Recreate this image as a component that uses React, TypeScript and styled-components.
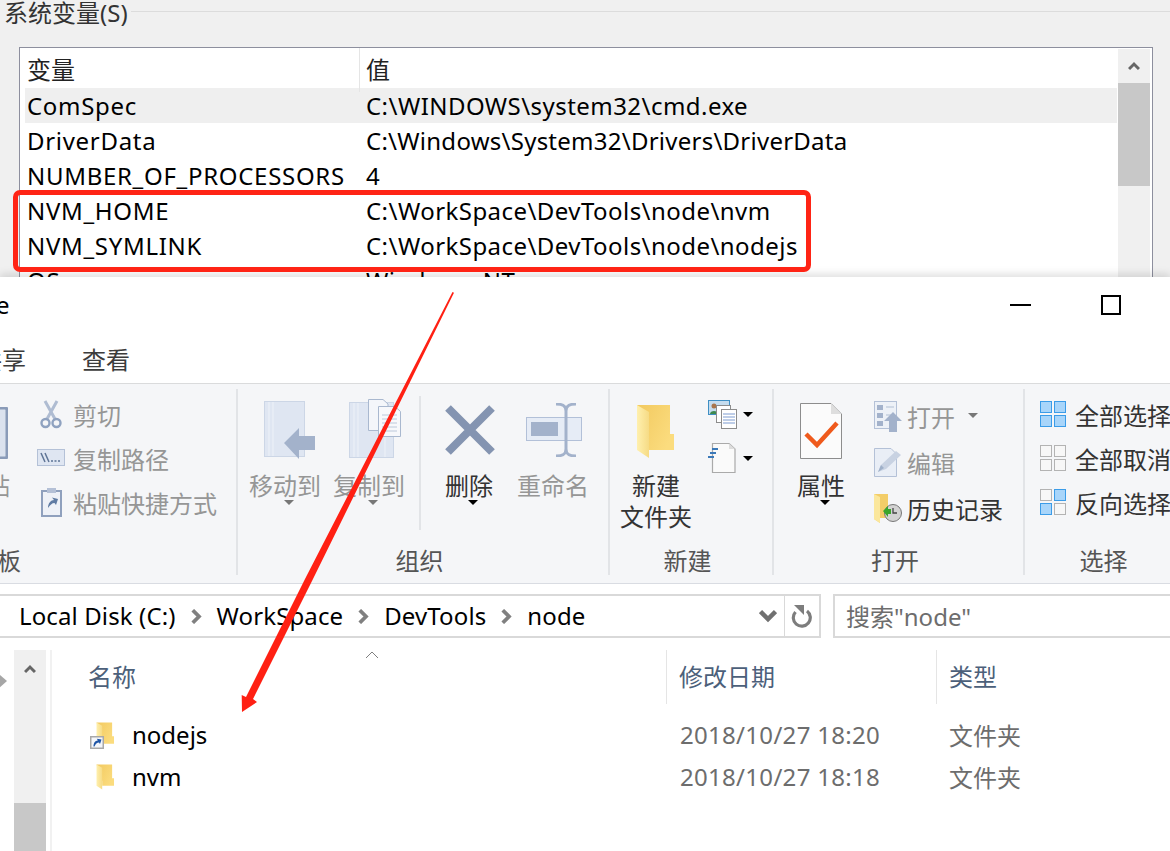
import React from "react";
import styled, { createGlobalStyle } from "styled-components";

const GlobalStyle = createGlobalStyle`
  html, body {
    margin: 0;
    padding: 0;
    background: #fff;
  }
  body {
    font-family: "Noto Sans", "Noto Sans CJK SC", sans-serif;
    font-size: 24px;
  }
`;

const Page = styled.div`
  position: relative;
  width: 1170px;
  height: 851px;
  overflow: hidden;
  display: flex;
  flex-direction: column;
  background: #fff;
`;

/* ---------- env vars dialog behind ---------- */
const EnvPanel = styled.section`
  height: 277px;
  flex-shrink: 0;
  background: #f0f0f0;
  overflow: hidden;
`;

const LegendRow = styled.div`
  display: flex;
  align-items: flex-start;
  height: 24px;
  padding-left: 4px;
  color: #333;
  line-height: 26px;
`;

const LegendLine = styled.div`
  flex: 1;
  height: 1px;
  margin: 11px 0 0 3px;
  background: #dcdcdc;
`;

const ListBox = styled.div`
  display: flex;
  width: 1132px;
  height: 240px;
  margin: 23px 0 0 19px;
  border: 1px solid #8d8f9e;
  border-bottom: 0;
  background: #fff;
`;

const ListTable = styled.div`
  flex: 1;
  padding: 0 1px 0 5px;
  min-width: 0;
`;

const HeaderRow = styled.div`
  display: grid;
  grid-template-columns: 335px 1fr;
  height: 40px;
  align-items: stretch;
  line-height: 44px;
  color: #222;
`;

const HeaderCell = styled.div<{ $last?: boolean }>`
  padding-left: ${(p) => (p.$last ? 6 : 2)}px;
  border-right: ${(p) => (p.$last ? 0 : "1px solid #e5e5e5")};
`;

const VarRow = styled.div<{ $active?: boolean }>`
  display: grid;
  grid-template-columns: 335px 1fr;
  height: 35px;
  line-height: 36px;
  color: #000;
  background: ${(p) => (p.$active ? "#efefef" : "transparent")};
  white-space: nowrap;
  letter-spacing: 0.45px;
`;

const VarName = styled.div`
  padding-left: 2px;
  letter-spacing: 0.7px;
`;

const VarValue = styled.div<{ $tight?: boolean }>`
  padding-left: 6px;
  letter-spacing: ${(p) => (p.$tight ? "0.25px" : "0.45px")};
`;

const ScrollBar = styled.div`
  width: 32px;
  margin: 1px 2px 0 0;
  background: #f0f0f0;
  display: flex;
  flex-direction: column;
  align-items: center;
`;

const ScrollArrow = styled.div<{ $h: number }>`
  height: ${(p) => p.$h}px;
  width: 100%;
  display: flex;
  align-items: center;
  justify-content: center;
  flex-shrink: 0;
`;

const ScrollThumb = styled.div<{ $h: number }>`
  width: 100%;
  height: ${(p) => p.$h}px;
  background: #c8c8c8;
`;

/* ---------- explorer window ---------- */
const Explorer = styled.section`
  position: relative;
  flex: 1;
  display: flex;
  flex-direction: column;
  background: #fff;
  box-shadow: 0 -3px 8px rgba(0, 0, 0, 0.13);
  min-height: 0;
`;

const TitleBar = styled.div`
  display: flex;
  justify-content: space-between;
  height: 62px;
  flex-shrink: 0;
`;

const WindowTitle = styled.div`
  margin-left: -48px;
  line-height: 56px;
  color: #000;
`;

const WindowControls = styled.div`
  display: flex;
  align-items: flex-start;
  padding: 18px 49px 0 0;
  gap: 70px;
`;

const MinButton = styled.div`
  width: 21px;
  height: 2px;
  margin-top: 9px;
  background: #000;
`;

const MaxButton = styled.div`
  width: 20px;
  height: 20px;
  box-sizing: border-box;
  border: 2px solid #000;
`;

const TabRow = styled.div`
  display: flex;
  height: 44px;
  gap: 56px;
  margin-left: -22px;
  flex-shrink: 0;
  line-height: 42px;
  color: #3c3c3c;
`;

const Ribbon = styled.div`
  display: flex;
  height: 199px;
  flex-shrink: 0;
  overflow: hidden;
  background: #f5f6f8;
  border-top: 1px solid #dadbdc;
  border-bottom: 1px solid #d9dce2;
`;

const RibbonGroup = styled.div<{ $w: number; $last?: boolean }>`
  width: ${(p) => p.$w}px;
  flex-shrink: 0;
  box-sizing: border-box;
  margin: 5px 0 8px;
  border-right: ${(p) => (p.$last ? 0 : "2px solid #e2e4e7")};
  display: flex;
  flex-direction: column;
`;

const GroupBody = styled.div<{ $pad: number; $gap?: number }>`
  flex: 1;
  display: flex;
  align-items: flex-start;
  padding-left: ${(p) => p.$pad}px;
  gap: ${(p) => p.$gap ?? 0}px;
  min-height: 0;
`;

const GroupLabel = styled.div<{ $flush?: boolean }>`
  height: 28px;
  line-height: 26px;
  padding-right: ${(p) => (p.$flush ? 0 : 7)}px;
  margin-left: ${(p) => (p.$flush ? -51 : 0)}px;
  text-align: ${(p) => (p.$flush ? "left" : "center")};
  color: #555;
  position: relative;
  top: 1px;
`;

const BigButton = styled.div<{ $w: number; $off?: boolean; $ml?: number }>`
  width: ${(p) => p.$w}px;
  margin-left: ${(p) => p.$ml ?? 0}px;
  flex-shrink: 0;
  display: flex;
  flex-direction: column;
  align-items: center;
  text-align: center;
  line-height: 31px;
  color: ${(p) => (p.$off ? "#969696" : "#333")};
`;

const BigIcon = styled.div<{ $nudge?: number; $lift?: number }>`
  height: 81px;
  display: flex;
  align-items: flex-end;
  justify-content: center;
  padding-left: ${(p) => p.$nudge ?? 0}px;
  padding-bottom: ${(p) => 11 + (p.$lift ?? 0)}px;
  box-sizing: border-box;
`;

const DropCaret = styled.div<{ $off?: boolean }>`
  width: 0;
  height: 0;
  border-left: 5px solid transparent;
  border-right: 5px solid transparent;
  border-top: 5px solid ${(p) => (p.$off ? "#777" : "#000")};
`;

const BigCaret = styled(DropCaret)`
  margin: -1px 0 0 8px;
`;

const OpenCaret = styled(DropCaret)`
  margin: 0 0 2px 8px;
`;

const InnerSeparator = styled.div`
  width: 2px;
  height: 134px;
  margin: 7px 24px 0 14px;
  background: #e2e4e7;
  flex-shrink: 0;
`;

const SmallColumn = styled.div<{ $top: number }>`
  display: flex;
  flex-direction: column;
  padding-top: ${(p) => p.$top}px;
  flex-shrink: 0;
`;

const SmallRow = styled.div<{ $h: number; $off?: boolean; $gap?: number }>`
  display: flex;
  align-items: center;
  height: ${(p) => p.$h}px;
  gap: ${(p) => p.$gap ?? 6}px;
  white-space: nowrap;
  color: ${(p) => (p.$off ? "#969696" : "#333")};
`;

const SmallIcon = styled.div<{ $w?: number }>`
  width: ${(p) => p.$w ?? 28}px;
  display: flex;
  justify-content: center;
  flex-shrink: 0;
`;

const AddressRow = styled.div`
  display: flex;
  gap: 12px;
  height: 44px;
  margin-top: 10px;
  flex-shrink: 0;
`;

const AddressBox = styled.div`
  width: 822px;
  margin-left: -1px;
  display: flex;
  align-items: center;
  box-sizing: border-box;
  border: 2px solid #d9d9d9;
  border-left: 0;
  padding-left: 20px;
  color: #000;
  white-space: nowrap;
  letter-spacing: 0.12px;
`;

const Crumb = styled.span`
  margin-bottom: 2px;
`;

const CrumbChevron = styled.div`
  width: 41px;
  display: flex;
  justify-content: center;
`;

const AddressSpacer = styled.div`
  flex: 1;
`;

const AddressDrop = styled.div`
  width: 32px;
  display: flex;
  justify-content: center;
`;

const RefreshButton = styled.div`
  width: 34px;
  height: 100%;
  display: flex;
  align-items: center;
  justify-content: center;
  border-left: 1px solid #d9d9d9;
`;

const SearchBox = styled.div`
  flex: 1;
  display: flex;
  align-items: center;
  box-sizing: border-box;
  border: 2px solid #d9d9d9;
  border-right: 0;
  padding: 0 0 2px 11px;
  color: #6d6d6d;
`;

const FileArea = styled.div`
  flex: 1;
  display: flex;
  margin-top: 12px;
  min-height: 0;
`;

const NavPane = styled.div`
  width: 50px;
  flex-shrink: 0;
  display: flex;
  position: relative;
`;

const NavCollapsed = styled.div`
  width: 14px;
  padding-top: 12px;
  overflow: hidden;
`;

const NavArrow = styled.svg`
  margin-left: -1px;
`;

const NavScroll = styled.div`
  width: 32px;
  background: #f0f0f0;
  display: flex;
  flex-direction: column;
  justify-content: space-between;
`;

const MainPane = styled.div`
  flex: 1;
  border-left: 2px solid #f1f1f1;
  min-width: 0;
`;

const ColumnHeader = styled.div`
  display: grid;
  grid-template-columns: 614px 270px 1fr;
  height: 50px;
  margin-bottom: 13px;
  color: #4c607a;
  line-height: 54px;
`;

const ColumnCell = styled.div<{ $first?: boolean }>`
  position: relative;
  box-sizing: border-box;
  padding-left: ${(p) => (p.$first ? 36 : 12)}px;
  border-left: ${(p) => (p.$first ? 0 : "1px solid #e5e5e5")};
`;

const SortCaret = styled.svg`
  position: absolute;
  left: 313px;
  top: 0;
`;

const FileRow = styled.div`
  display: grid;
  grid-template-columns: 614px 270px 1fr;
  height: 42px;
  align-items: center;
  white-space: nowrap;
`;

const FileName = styled.div`
  display: flex;
  align-items: center;
  padding-left: 38px;
  color: #000;
`;

const FileIconBox = styled.div`
  position: relative;
  width: 42px;
  height: 28px;
  flex-shrink: 0;
  padding: 2px 0 0 6px;
  box-sizing: border-box;
`;

const ShortcutBadge = styled.svg`
  position: absolute;
  left: 0;
  top: 16px;
`;

const FileDate = styled.div`
  padding-left: 14px;
  color: #6d6d6d;
  letter-spacing: 0.3px;
`;

const FileType = styled.div`
  padding-left: 13px;
  color: #6d6d6d;
`;

/* ---------- annotations ---------- */
const RedFrame = styled.div`
  position: absolute;
  left: 13px;
  top: 190px;
  width: 798px;
  height: 82px;
  box-sizing: border-box;
  border: 5px solid #ff2415;
  border-radius: 7px;
`;

const ArrowLayer = styled.svg`
  position: absolute;
  left: 0;
  top: 0;
  pointer-events: none;
`;

/* ---------- icons ---------- */
const Chev = ({ dir, color = "#666", size = 12 }: { dir: "up" | "down" | "right"; color?: string; size?: number }) => {
  const d = dir === "up" ? "M1 9 L6 4 L11 9" : dir === "down" ? "M1 3 L6 8 L11 3" : "M3 1 L8 6 L3 11";
  return (
    <svg width={size} height={size} viewBox="0 0 12 12" fill="none">
      <path d={d} stroke={color} strokeWidth="3" />
    </svg>
  );
};

const Scissors = () => (
  <svg width="22" height="29" viewBox="0 0 22 29" fill="none">
    <path d="M5 1 L15 19 M17 1 L7 19" stroke="#afbcd2" strokeWidth="3" />
    <circle cx="5.5" cy="23" r="4" stroke="#8fa2c0" strokeWidth="2.4" />
    <circle cx="16.5" cy="23" r="4" stroke="#8fa2c0" strokeWidth="2.4" />
  </svg>
);

const PathIcon = () => (
  <svg width="28" height="18" viewBox="0 0 28 18" fill="none">
    <rect x="0.5" y="0.5" width="27" height="16" fill="#dfe6f2" stroke="#b4c1d7" />
    <path d="M4 4 L8 13 M8 4 L12 13" stroke="#5f7596" strokeWidth="1.5" />
    <path d="M14 12 H24" stroke="#5f7596" strokeWidth="1.6" strokeDasharray="2 1.5" />
  </svg>
);

const ClipShortcut = () => (
  <svg width="21" height="30" viewBox="0 0 21 30">
    <rect x="1" y="4" width="19" height="25" fill="#eef1f7" stroke="#8fa0bd" strokeWidth="2" />
    <rect x="6" y="1" width="9" height="5" fill="#b4c0d6" />
    <path d="M7 21 C7 16 10 13 13 13 L11 10.5 L17 12 L15 18 L13.5 16 C11 16 9 18 7 21 Z" fill="#5f7ba3" />
  </svg>
);

const PastePartial = () => (
  <svg width="44" height="52" viewBox="0 0 44 52">
    <rect x="1" y="1" width="42" height="50" rx="2" fill="#dbe2ee" stroke="#8a9bb8" strokeWidth="3" />
  </svg>
);

const MoveIcon = () => (
  <svg width="54" height="58" viewBox="0 0 54 58">
    <rect x="0.5" y="0.5" width="40" height="55" fill="#dfe6f2" stroke="#ccd6e6" />
    <path d="M5 1 V55 M9 1 V55" stroke="#eef2f8" strokeWidth="1" />
    <path d="M20 42 L35 27 V35 H51 V49 H35 V58 Z" fill="#a3b2cb" />
  </svg>
);

const CopyIcon = () => (
  <svg width="52" height="60" viewBox="0 0 52 60">
    <rect x="0.5" y="3.5" width="44" height="55" fill="#dfe6f2" stroke="#ccd6e6" />
    <path d="M5 4 V58 M9 4 V58 M36 24 V58" stroke="#eef2f8" strokeWidth="1" />
    <path d="M19.5 0.5 H34 L39 5 V31.5 H19.5 Z" fill="#f4f6fa" stroke="#a9b8cf" />
    <path d="M29.5 7.5 H46 L51.5 12.5 V37.5 H29.5 Z" fill="#f7f8fb" stroke="#a9b8cf" />
    <path d="M33 16 H48 M33 20 H48 M33 24 H48 M33 28 H48 M33 32 H48" stroke="#bcc8da" strokeWidth="1" />
  </svg>
);

const DeleteIcon = () => (
  <svg width="50" height="50" viewBox="0 0 50 50">
    <path d="M3 3 L47 47 M47 3 L3 47" stroke="#8494b1" strokeWidth="8" />
  </svg>
);

const RenameIcon = () => (
  <svg width="56" height="54" viewBox="0 0 56 54" fill="none">
    <rect x="0.5" y="14.5" width="55" height="23" fill="#e6ecf6" stroke="#b2c0d8" />
    <rect x="5" y="19" width="27" height="14" fill="#a3b2cb" />
    <path d="M35 1 C42 1 45 3 45 8 V46 C45 51 42 53 35 53 M55 1 C48 1 45 3 45 8 M45 46 C45 51 48 53 55 53" transform="translate(-5 0)" stroke="#a3b2cb" strokeWidth="3" />
  </svg>
);

const FolderIcon = ({ id, width, height }: { id: string; width: number; height: number }) => (
  <svg width={width} height={height} viewBox="0 0 38 55">
    <defs>
      <linearGradient id={id + "b"} x1="0" y1="0" x2="1" y2="0.6">
        <stop offset="0" stopColor="#f2c95f" />
        <stop offset="1" stopColor="#fbdc7e" />
      </linearGradient>
      <linearGradient id={id + "f"} x1="0" y1="0" x2="1" y2="0">
        <stop offset="0" stopColor="#fff0ae" />
        <stop offset="1" stopColor="#f6db85" />
      </linearGradient>
    </defs>
    <path d="M0 1 H33 V30 H37 V46 H12 V36 Z" fill={`url(#${id}b)`} />
    <path d="M0 1 L12 8 V54 L0 46 Z" fill={`url(#${id}f)`} />
  </svg>
);

const ContactCopy = () => (
  <svg width="29" height="29" viewBox="0 0 29 29">
    <rect x="0.5" y="0.5" width="21" height="14" fill="#c5dcee" stroke="#3f8fc4" />
    <circle cx="6" cy="6" r="2.5" fill="#a9754b" />
    <path d="M2 14 C2 10 10 10 10 14 Z" fill="#3f8a4f" />
    <rect x="8.5" y="5.5" width="14" height="17" fill="#fff" stroke="#8c8c8c" />
    <rect x="13.5" y="9.5" width="15" height="19" fill="#fff" stroke="#8c8c8c" />
    <path d="M15 14 H27 M15 17 H27 M15 20 H27 M15 23 H27" stroke="#7d9bd0" strokeWidth="1" />
  </svg>
);

const NewItem = () => (
  <svg width="28" height="31" viewBox="0 0 28 31">
    <path d="M4.5 0.5 H21 L27 6 V29.5 H4.5 Z" fill="#fafafa" stroke="#aaa" strokeWidth="1.2" />
    <path d="M21 0.5 V6 H27 Z" fill="#ddd" />
    <path d="M4 6 H10 M2 10 H8 M0 14 H6" stroke="#3b79b8" strokeWidth="2" />
  </svg>
);

const PropsPage = () => (
  <svg width="42" height="56" viewBox="0 0 42 56" fill="none">
    <path d="M0.5 0.5 H31 L41.5 11 V55.5 H0.5 Z" fill="#fbfbfb" stroke="#8d8d8d" />
    <path d="M31 0.5 V11 H41.5 Z" fill="#dedede" />
    <path d="M6 31 L17 42 L37 20" stroke="#ef5a1c" strokeWidth="4.5" />
  </svg>
);

const OpenIcon = () => (
  <svg width="28" height="31" viewBox="0 0 28 31">
    <rect x="0.5" y="0.5" width="22" height="27" fill="#edf1f7" stroke="#b4c1d7" />
    <rect x="3" y="4" width="6" height="5" fill="#a3b2cb" />
    <rect x="3" y="12" width="6" height="5" fill="#a3b2cb" />
    <rect x="3" y="20" width="6" height="5" fill="#a3b2cb" />
    <path d="M12 6 H20 M12 14 H17" stroke="#c5cfdf" strokeWidth="1.5" />
    <path d="M10 20 L19 11 L28 20 H23 V31 H15 V20 Z" fill="#a3b2cb" />
  </svg>
);

const EditIcon = () => (
  <svg width="28" height="29" viewBox="0 0 28 29">
    <path d="M0.5 0.5 H17 L22.5 6 V28.5 H0.5 Z" fill="#e9eef6" stroke="#b4c1d7" />
    <path d="M4 24 L7 17 L22 3 L27 7 L12 21 Z" fill="#c8d2e2" />
    <path d="M4 24 L7 17 L10 20 Z" fill="#9fb0c9" />
  </svg>
);

const HistoryIcon = () => (
  <svg width="28" height="29" viewBox="0 0 28 29">
    <path d="M0 0 H14 V12 H18 V24 H6 V29 L0 25 Z" fill="#f3cd68" />
    <path d="M0 0 L6 3 V29 L0 25 Z" fill="#fbe79c" />
    <circle cx="19" cy="19" r="8.5" fill="#d2d2d2" stroke="#777" />
    <path d="M19 14 V19 H23" stroke="#444" strokeWidth="1.3" fill="none" />
    <path d="M9 17 L14 12 V15 H17 V20 H14 V23 Z" fill="#3aa52b" />
  </svg>
);

const SelectGrid = ({ on }: { on: boolean[] }) => (
  <svg width="26" height="26" viewBox="0 0 26 26">
    {[
      [0, 0],
      [14, 0],
      [0, 14],
      [14, 14],
    ].map(([x, y], i) => (
      <rect
        key={i}
        x={x + 0.5}
        y={y + 0.5}
        width="11"
        height="11"
        fill={on[i] ? "#a8d5fa" : "#f7f7f7"}
        stroke={on[i] ? "#3b9ce8" : "#b3b3b3"}
      />
    ))}
  </svg>
);

const Refresh = () => (
  <svg width="22" height="24" viewBox="0 0 22 24" fill="none">
    <path d="M16 7 A8.5 8.5 0 1 1 4.5 8" stroke="#7d7d7d" strokeWidth="3.2" />
    <path d="M3 1 H13 V11 Z" fill="#7d7d7d" />
  </svg>
);

const App: React.FC = () => {
  return (
    <Page>
      <GlobalStyle />
      <EnvPanel>
        <LegendRow>
          系统变量(S)
          <LegendLine />
        </LegendRow>
        <ListBox>
          <ListTable>
            <HeaderRow>
              <HeaderCell>变量</HeaderCell>
              <HeaderCell $last>值</HeaderCell>
            </HeaderRow>
            <VarRow $active>
              <VarName>ComSpec</VarName>
              <VarValue>C:\WINDOWS\system32\cmd.exe</VarValue>
            </VarRow>
            <VarRow>
              <VarName>DriverData</VarName>
              <VarValue $tight>C:\Windows\System32\Drivers\DriverData</VarValue>
            </VarRow>
            <VarRow>
              <VarName>NUMBER_OF_PROCESSORS</VarName>
              <VarValue>4</VarValue>
            </VarRow>
            <VarRow>
              <VarName>NVM_HOME</VarName>
              <VarValue>C:\WorkSpace\DevTools\node\nvm</VarValue>
            </VarRow>
            <VarRow>
              <VarName>NVM_SYMLINK</VarName>
              <VarValue>C:\WorkSpace\DevTools\node\nodejs</VarValue>
            </VarRow>
            <VarRow>
              <VarName>OS</VarName>
              <VarValue>Windows_NT</VarValue>
            </VarRow>
          </ListTable>
          <ScrollBar>
            <ScrollArrow $h={34}>
              <Chev dir="up" />
            </ScrollArrow>
            <ScrollThumb $h={103} />
          </ScrollBar>
        </ListBox>
      </EnvPanel>

      <Explorer>
        <TitleBar>
          <WindowTitle>node</WindowTitle>
          <WindowControls>
            <MinButton />
            <MaxButton />
          </WindowControls>
        </TitleBar>
        <TabRow>
          <div>共享</div>
          <div>查看</div>
        </TabRow>
        <Ribbon>
          <RibbonGroup $w={238}>
            <GroupBody $pad={0} $gap={27}>
              <BigButton $w={48} $off $ml={-38}>
                <BigIcon>
                  <PastePartial />
                </BigIcon>
                粘贴
              </BigButton>
              <SmallColumn $top={3}>
                <SmallRow $h={44} $off $gap={8}>
                  <SmallIcon>
                    <Scissors />
                  </SmallIcon>
                  剪切
                </SmallRow>
                <SmallRow $h={44} $off $gap={8}>
                  <SmallIcon>
                    <PathIcon />
                  </SmallIcon>
                  复制路径
                </SmallRow>
                <SmallRow $h={44} $off $gap={8}>
                  <SmallIcon>
                    <ClipShortcut />
                  </SmallIcon>
                  粘贴快捷方式
                </SmallRow>
              </SmallColumn>
            </GroupBody>
            <GroupLabel $flush>剪贴板</GroupLabel>
          </RibbonGroup>

          <RibbonGroup $w={372}>
            <GroupBody $pad={11}>
              <BigButton $w={72} $off>
                <BigIcon $nudge={12}>
                  <MoveIcon />
                </BigIcon>
                移动到
                <BigCaret $off />
              </BigButton>
              <BigButton $w={72} $off $ml={12}>
                <BigIcon $nudge={12}>
                  <CopyIcon />
                </BigIcon>
                复制到
                <BigCaret $off />
              </BigButton>
              <InnerSeparator />
              <BigButton $w={48}>
                <BigIcon $nudge={2} $lift={4}>
                  <DeleteIcon />
                </BigIcon>
                删除
                <BigCaret />
              </BigButton>
              <BigButton $w={72} $off $ml={24}>
                <BigIcon $nudge={2} $lift={2}>
                  <RenameIcon />
                </BigIcon>
                重命名
              </BigButton>
            </GroupBody>
            <GroupLabel>组织</GroupLabel>
          </RibbonGroup>

          <RibbonGroup $w={164}>
            <GroupBody $pad={10} $gap={15}>
              <BigButton $w={72}>
                <BigIcon>
                  <FolderIcon id="bigFolder" width={38} height={55} />
                </BigIcon>
                新建
                <br />
                文件夹
              </BigButton>
              <SmallColumn $top={3}>
                <SmallRow $h={44}>
                  <SmallIcon $w={30}>
                    <ContactCopy />
                  </SmallIcon>
                  <DropCaret />
                </SmallRow>
                <SmallRow $h={44}>
                  <SmallIcon $w={30}>
                    <NewItem />
                  </SmallIcon>
                  <DropCaret />
                </SmallRow>
              </SmallColumn>
            </GroupBody>
            <GroupLabel>新建</GroupLabel>
          </RibbonGroup>

          <RibbonGroup $w={251}>
            <GroupBody $pad={23} $gap={29}>
              <BigButton $w={48}>
                <BigIcon>
                  <PropsPage />
                </BigIcon>
                属性
                <BigCaret />
              </BigButton>
              <SmallColumn $top={4}>
                <SmallRow $h={46} $off $gap={5}>
                  <SmallIcon>
                    <OpenIcon />
                  </SmallIcon>
                  打开
                  <OpenCaret $off />
                </SmallRow>
                <SmallRow $h={46} $off $gap={5}>
                  <SmallIcon>
                    <EditIcon />
                  </SmallIcon>
                  编辑
                </SmallRow>
                <SmallRow $h={46} $gap={5}>
                  <SmallIcon>
                    <HistoryIcon />
                  </SmallIcon>
                  历史记录
                </SmallRow>
              </SmallColumn>
            </GroupBody>
            <GroupLabel>打开</GroupLabel>
          </RibbonGroup>

          <RibbonGroup $w={164} $last>
            <GroupBody $pad={15}>
              <SmallColumn $top={3}>
                <SmallRow $h={44} $gap={9}>
                  <SelectGrid on={[true, true, true, true]} />
                  全部选择
                </SmallRow>
                <SmallRow $h={44} $gap={9}>
                  <SelectGrid on={[false, false, false, false]} />
                  全部取消
                </SmallRow>
                <SmallRow $h={44} $gap={9}>
                  <SelectGrid on={[false, true, true, false]} />
                  反向选择
                </SmallRow>
              </SmallColumn>
            </GroupBody>
            <GroupLabel>选择</GroupLabel>
          </RibbonGroup>
        </Ribbon>

        <AddressRow>
          <AddressBox>
            <Crumb>Local Disk (C:)</Crumb>
            <CrumbChevron>
              <Chev dir="right" color="#808080" size={15} />
            </CrumbChevron>
            <Crumb>WorkSpace</Crumb>
            <CrumbChevron>
              <Chev dir="right" color="#808080" size={15} />
            </CrumbChevron>
            <Crumb>DevTools</Crumb>
            <CrumbChevron>
              <Chev dir="right" color="#808080" size={15} />
            </CrumbChevron>
            <Crumb>node</Crumb>
            <AddressSpacer />
            <AddressDrop>
              <Chev dir="down" color="#707070" size={18} />
            </AddressDrop>
            <RefreshButton>
              <Refresh />
            </RefreshButton>
          </AddressBox>
          <SearchBox>搜索"node"</SearchBox>
        </AddressRow>

        <FileArea>
          <NavPane>
            <NavCollapsed>
              <NavArrow width="8" height="14" viewBox="0 0 8 14">
                <path d="M0 0 L8 7 L0 14 Z" fill="#a6a6a6" />
              </NavArrow>
            </NavCollapsed>
            <NavScroll>
              <ScrollArrow $h={38}>
                <Chev dir="up" />
              </ScrollArrow>
              <ScrollThumb $h={48} />
            </NavScroll>
          </NavPane>
          <MainPane>
            <ColumnHeader>
              <ColumnCell $first>
                名称
                <SortCaret width="14" height="10" viewBox="0 0 14 10" fill="none">
                  <path d="M1 8 L7 2 L13 8" stroke="#7f7f7f" strokeWidth="1" />
                </SortCaret>
              </ColumnCell>
              <ColumnCell>修改日期</ColumnCell>
              <ColumnCell>类型</ColumnCell>
            </ColumnHeader>
            <FileRow>
              <FileName>
                <FileIconBox>
                  <FolderIcon id="rowFolderA" width={19} height={26} />
                  <ShortcutBadge width="14" height="13" viewBox="0 0 14 13">
                    <rect x="0.75" y="0.75" width="12.5" height="11.5" fill="#f4f6fa" stroke="#a8a8a8" strokeWidth="1.5" />
                    <path d="M3.5 10.5 C3.5 6.5 5.5 4.5 8 4.5 L6.8 2.8 L11.5 3.5 L10 8 L9 6.5 C7 6.5 5.5 8 4.5 10.5 Z" fill="#1f55a6" />
                  </ShortcutBadge>
                </FileIconBox>
                nodejs
              </FileName>
              <FileDate>2018/10/27 18:20</FileDate>
              <FileType>文件夹</FileType>
            </FileRow>
            <FileRow>
              <FileName>
                <FileIconBox>
                  <FolderIcon id="rowFolderB" width={19} height={26} />
                </FileIconBox>
                nvm
              </FileName>
              <FileDate>2018/10/27 18:18</FileDate>
              <FileType>文件夹</FileType>
            </FileRow>
          </MainPane>
        </FileArea>
      </Explorer>

      <RedFrame />
      <ArrowLayer width="1170" height="851" viewBox="0 0 1170 851">
        <polygon
          points="452.5,292 454,292.7 312,581 253,699 257,702 242,712 241.7,695 246,697 305,579"
          fill="#ff2013"
        />
      </ArrowLayer>
    </Page>
  );
};

export default App;
